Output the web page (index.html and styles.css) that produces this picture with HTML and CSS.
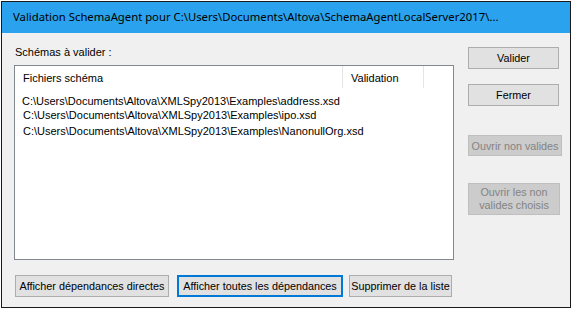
FILE: index.html
```html
<!DOCTYPE html>
<html>
<head>
  <title>Validation SchemaAgent</title>
  <link rel="stylesheet" href="styles.css">
</head>
<body>
  <div class="window">
    <div class="titlebar">Validation SchemaAgent pour C:\Users\Documents\Altova\SchemaAgentLocalServer2017\...</div>
    <div class="dialog">
      <div class="left">
        <div class="label">Schémas à valider :</div>
        <div class="list">
          <div class="list-head">
            <div class="col col-file">Fichiers schéma</div>
            <div class="col col-valid">Validation</div>
            <div class="col col-rest"></div>
          </div>
          <div class="row r1">C:\Users\Documents\Altova\XMLSpy2013\Examples\address.xsd</div>
          <div class="row r2">C:\Users\Documents\Altova\XMLSpy2013\Examples\ipo.xsd</div>
          <div class="row r3">C:\Users\Documents\Altova\XMLSpy2013\Examples\NanonullOrg.xsd</div>
        </div>
        <div class="bottom-buttons">
          <button class="btn btn-direct">Afficher dépendances directes</button>
          <button class="btn btn-all focused">Afficher toutes les dépendances</button>
          <button class="btn btn-remove">Supprimer de la liste</button>
        </div>
      </div>
      <div class="right">
        <button class="btn btn-side btn-valider">Valider</button>
        <button class="btn btn-side btn-fermer">Fermer</button>
        <button class="btn btn-side disabled btn-open">Ouvrir non valides</button>
        <button class="btn btn-side disabled btn-open-sel">Ouvrir les non<br>valides choisis</button>
      </div>
    </div>
  </div>
</body>
</html>
```

FILE: styles.css
```css
html, body {
  margin: 0;
  padding: 0;
  background: #ffffff;
}
body {
  padding: 1px 0 0 1px;
}
.window {
  width: 568px;
  height: 305px;
  border: 1px solid #1a1a1a;
  background: #f0f0f0;
  font-family: "Liberation Sans", Arial, sans-serif;
  font-size: 11px;
  color: #000;
}
.titlebar {
  height: 31px;
  line-height: 30px;
  padding-left: 11px;
  background: #2aa2ed;
  font-family: "Noto Sans", "Open Sans", sans-serif;
  font-size: 11.3px;
  color: #000;
  white-space: nowrap;
  overflow: hidden;
}
.dialog {
  display: flex;
  padding: 13px 0 10px 12px;
  height: 251px;
}
.left {
  width: 440px;
}
.label {
  height: 13px;
  line-height: 13px;
  margin-bottom: 6px;
  padding-left: 1px;
}
.list {
  height: 193px;
  border: 1px solid #828790;
  background: #fff;
}
.list-head {
  display: flex;
  height: 23px;
}
.col {
  height: 22px;
  line-height: 24px;
  padding-left: 8px;
  box-sizing: border-box;
}
.col-file {
  width: 328px;
  border-right: 1px solid #e5e5e5;
}
.col-valid {
  width: 81px;
  border-right: 1px solid #e5e5e5;
}
.row {
  height: 14px;
  line-height: 14px;
  padding-left: 7px;
  white-space: nowrap;
}
.r1 {
  margin-top: 5px;
}
.r2, .r3 {
  padding-left: 8px;
}
.r3 {
  margin-top: 2px;
}
.bottom-buttons {
  display: flex;
  margin-top: 15px;
  padding-left: 1px;
}
.btn {
  font-family: "Liberation Sans", Arial, sans-serif;
  font-size: 10.8px;
  color: #000;
  background: #e1e1e1;
  border: 1px solid #adadad;
  padding: 0;
  margin: 0;
  height: 22px;
  box-sizing: border-box;
  line-height: 12px;
}
.btn-direct {
  width: 154px;
}
.btn-all {
  width: 166px;
  margin-left: 8px;
}
.btn-remove {
  width: 103px;
  margin-left: 6px;
}
.focused {
  border: 2px solid #0078d7;
}
.right {
  display: flex;
  flex-direction: column;
  align-items: flex-start;
  margin-left: 14px;
  padding-top: 1px;
}
.btn-valider, .btn-fermer {
  width: 91px;
}
.btn-fermer {
  margin-top: 15px;
}
.btn-open {
  width: 94px;
  height: 21px;
  margin-top: 29px;
}
.btn-open-sel {
  width: 92px;
  height: 32px;
  margin-top: 27px;
  line-height: 13px;
}
.disabled {
  background: #cccccc;
  border-color: #bfbfbf;
  color: #838383;
}
```
